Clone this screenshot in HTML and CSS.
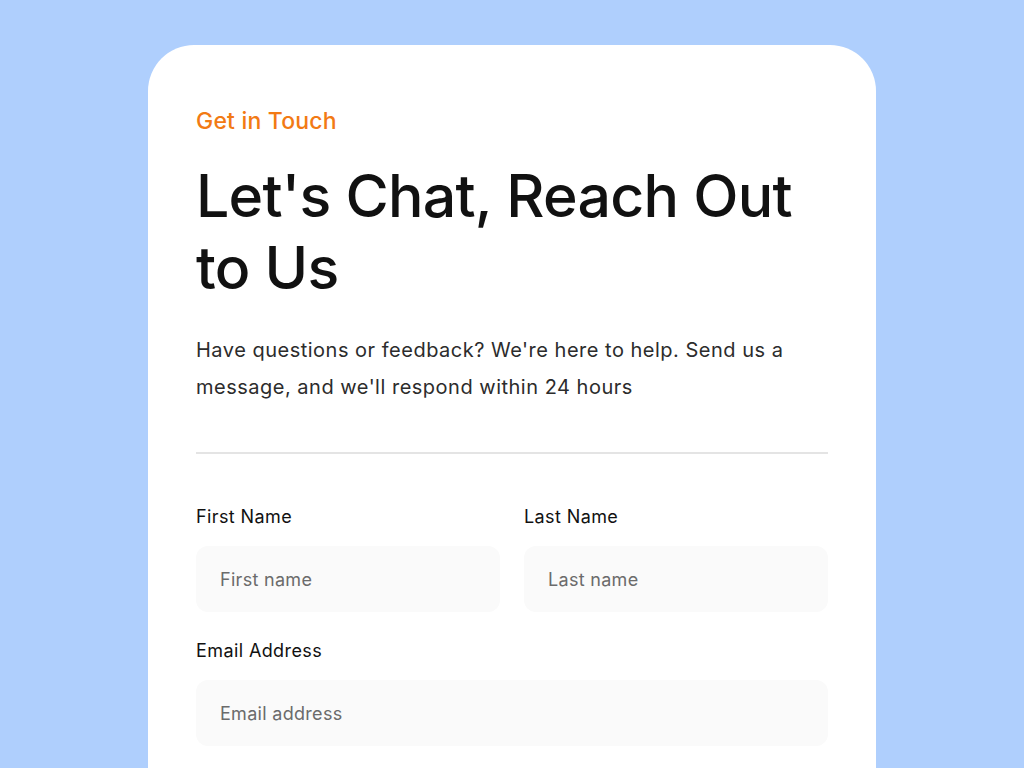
FILE: index.html
```html
<!DOCTYPE html>
<html lang="en">
<head>
<meta charset="utf-8">
<title>Get in Touch</title>
<link rel="stylesheet" href="styles.css">
</head>
<body>
<main class="stage">
  <section class="card">
    <p class="eyebrow">Get in Touch</p>
    <h1 class="title">Let's Chat, Reach Out to Us</h1>
    <p class="lead">Have questions or feedback? We're here to help. Send us a message, and we'll respond within 24 hours</p>
    <hr class="divider">
    <form class="form">
      <div class="row">
        <label class="field">
          <span class="label">First Name</span>
          <input class="input" type="text" placeholder="First name">
        </label>
        <label class="field">
          <span class="label">Last Name</span>
          <input class="input" type="text" placeholder="Last name">
        </label>
      </div>
      <label class="field">
        <span class="label">Email Address</span>
        <input class="input" type="email" placeholder="Email address">
      </label>
    </form>
  </section>
</main>
</body>
</html>
```
FILE: styles.css
```css
* { box-sizing: border-box; }
html, body {
  margin: 0;
  height: 100%;
  overflow: hidden;
}
body {
  background: #afcffd;
  font-family: "Inter", "Noto Sans", sans-serif;
  color: #111;
}
.stage {
  display: flex;
  justify-content: center;
  padding-top: 45px;
}
.card {
  width: 728px;
  background: #fff;
  border-radius: 46px 46px 0 0;
  padding: 61px 48px 200px;
}
.eyebrow {
  margin: 0;
  color: #f27a14;
  font-size: 23px;
  line-height: 30px;
  font-weight: 500;
  letter-spacing: 0.2px;
}
.title {
  margin: 24px 0 0;
  font-size: 59px;
  line-height: 72px;
  font-weight: 500;
  letter-spacing: -0.75px;
  color: #111;
  width: 630px;
}
.lead {
  margin: 28px 0 0;
  font-size: 20px;
  line-height: 37px;
  color: #2c2c2c;
  letter-spacing: 0.5px;
  width: 620px;
}
.divider {
  margin: 46px 0 0;
  border: 0;
  border-top: 2px solid #e4e4e4;
}
.form {
  display: flex;
  flex-direction: column;
  gap: 26px;
  margin-top: 50px;
}
.row {
  display: grid;
  grid-template-columns: 304px 304px;
  gap: 24px;
}
.field {
  display: flex;
  flex-direction: column;
  gap: 16px;
}
.label {
  font-size: 18px;
  line-height: 26px;
  color: #111;
  letter-spacing: 0.4px;
}
.input {
  display: block;
  height: 66px;
  border: 0;
  border-radius: 12px;
  background: #fafafa;
  padding: 0 24px;
  font-family: inherit;
  font-size: 18px;
  letter-spacing: 0.3px;
  color: #111;
  outline: none;
}
.input::placeholder { color: #6b6b6b; }
```
